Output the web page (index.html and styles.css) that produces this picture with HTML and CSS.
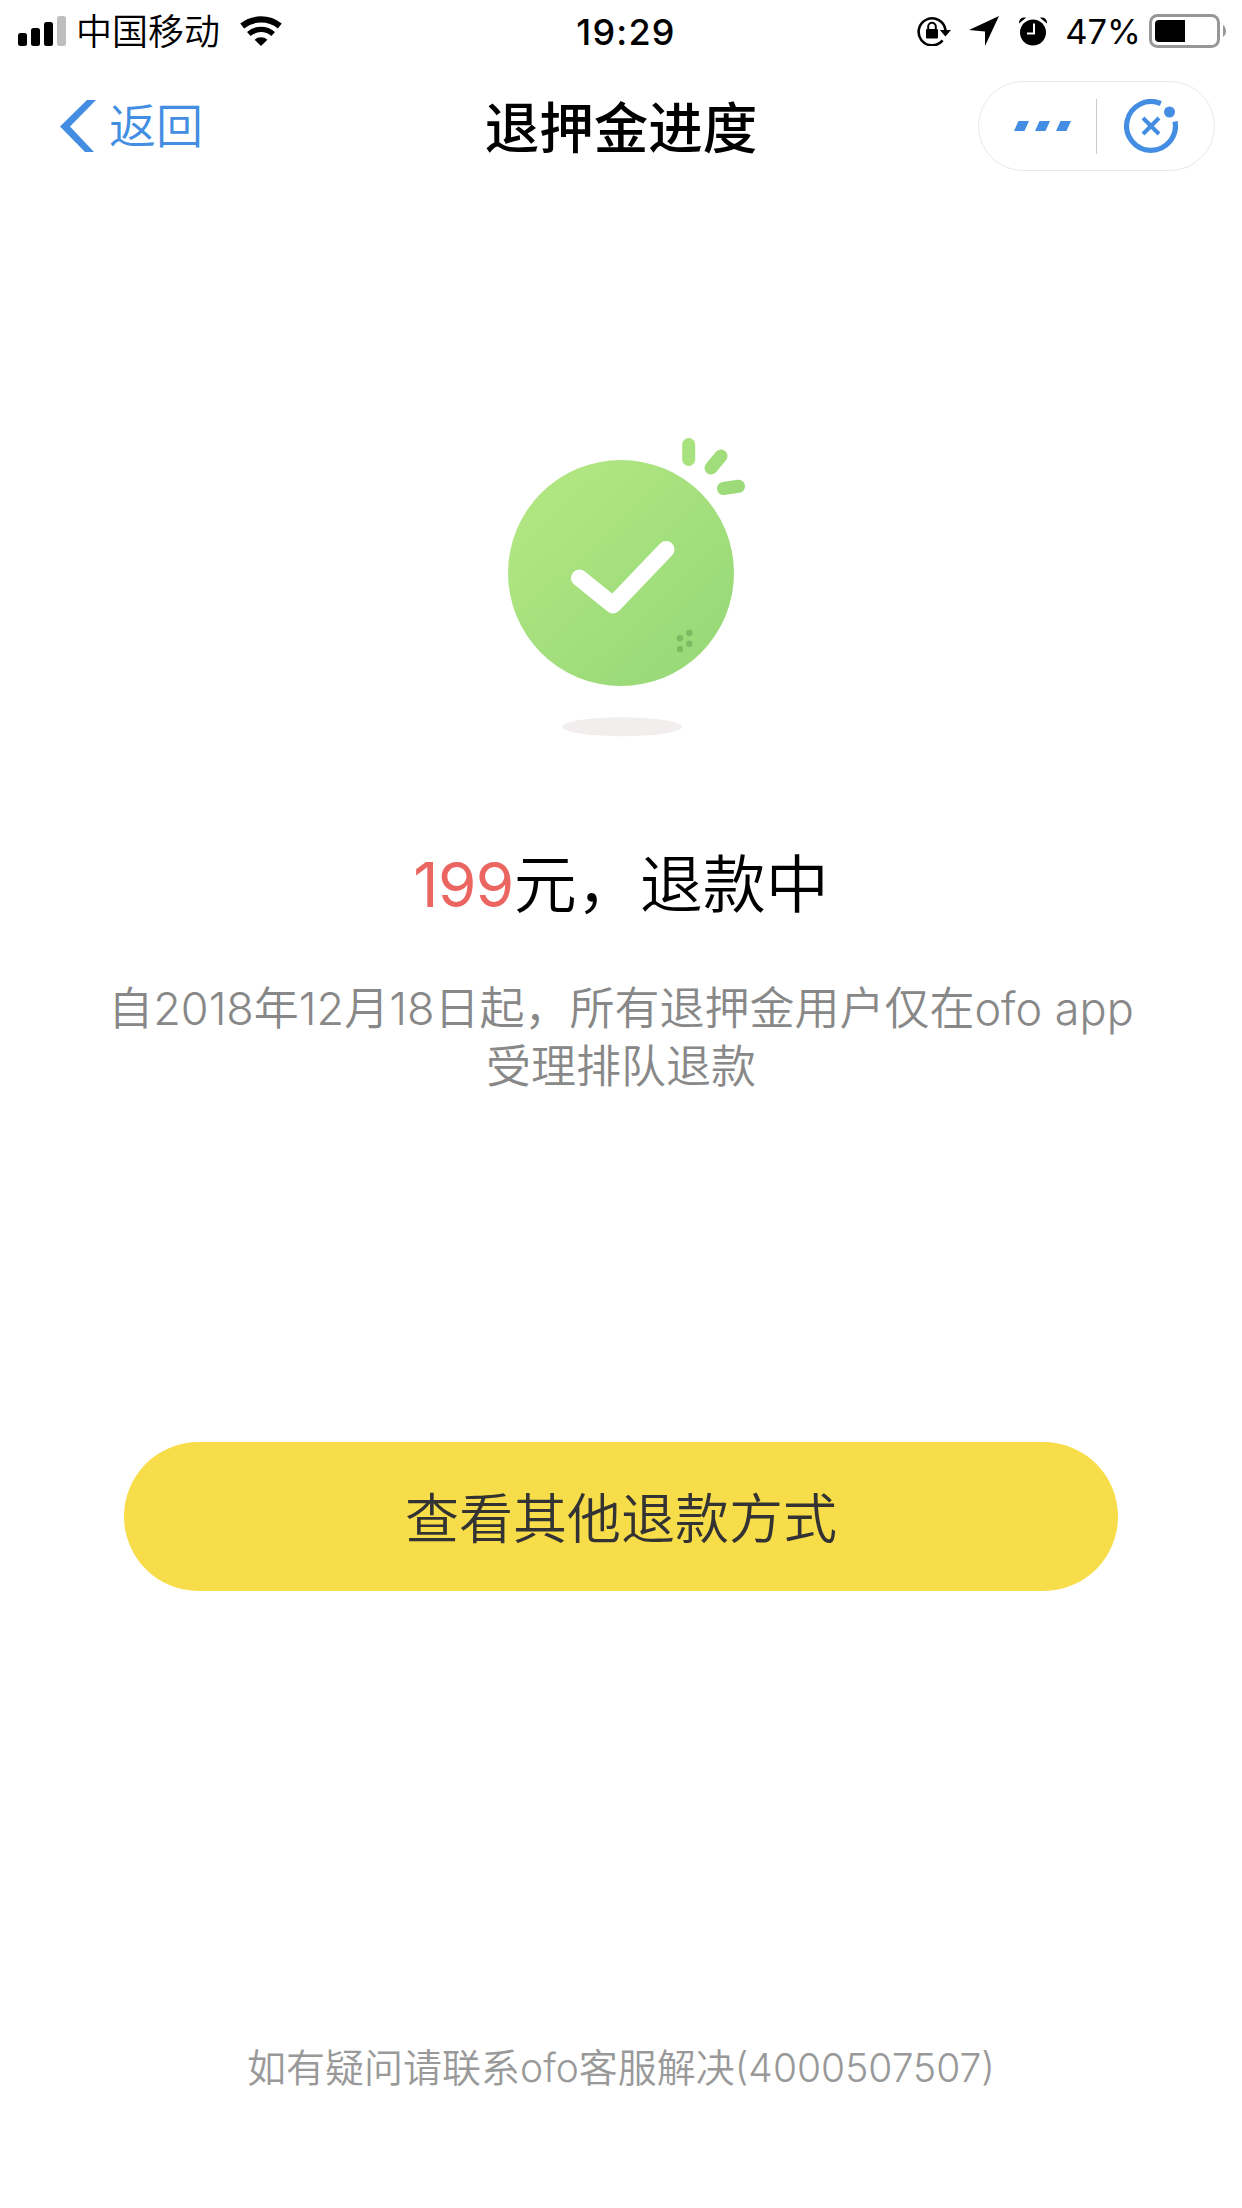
FILE: index.html
```
<!DOCTYPE html>
<html lang="zh-CN">
<head>
    <meta charset="UTF-8">
    <meta name="viewport" content="width=device-width, initial-scale=1.0">
    <title>退押金进度</title>
    <link rel="stylesheet" href="styles.css">
</head>
<body>
    <div class="status-bar">
        <div class="status-left">
            <svg class="signal" width="48" height="30" viewBox="0 0 48 30">
                <rect x="0" y="17" width="9" height="13" rx="2.5"/>
                <rect x="13" y="12" width="9" height="18" rx="2.5"/>
                <rect x="26" y="6" width="9" height="24" rx="2.5"/>
                <rect x="39" y="0" width="9" height="30" rx="2.5" fill="#bfbfbf"/>
            </svg>
            <span class="carrier">中国移动</span>
            <svg class="wifi" width="42" height="30" viewBox="0 0 42 30">
                <path d="M2.2 10A30 30 0 0 1 39.8 10" fill="none" stroke="#000" stroke-width="6.2"/>
                <path d="M8.8 18A18.5 18.5 0 0 1 33.2 18" fill="none" stroke="#000" stroke-width="5.4"/>
                <path d="M14.6 23.8a9.5 9.5 0 0 1 12.8 0L21 30z"/>
            </svg>
        </div>
        <div class="clock">19:29</div>
        <div class="status-right">
            <svg class="lock" width="34" height="30" viewBox="0 0 34 30">
                <path d="M25.6 24.4A13.5 13.5 0 1 1 28.5 14" fill="none" stroke="#000" stroke-width="2.6"/>
                <path d="M22.8 14h11.2l-5.6 6.6z"/>
                <rect x="9" y="13" width="12" height="9.5" rx="1"/>
                <path d="M11.2 14v-3.4a3.8 3.8 0 0 1 7.6 0V14" fill="none" stroke="#000" stroke-width="2"/>
            </svg>
            <svg class="location" width="30" height="30" viewBox="0 0 30 30">
                <path d="M30 0L16 30V15.5L0 14z"/>
            </svg>
            <svg class="alarm" width="28" height="29" viewBox="0 0 28 29">
                <circle cx="14" cy="15.5" r="13"/>
                <path d="M0 6.5C-.4 2 3.4-.6 7 .8zM28 6.5C28.4 2 24.6-.6 21 .8z"/>
                <path d="M15 6.5V16.5H8" fill="none" stroke="#fff" stroke-width="2"/>
            </svg>
            <span class="percent">47%</span>
            <svg class="battery" width="78" height="34" viewBox="0 0 78 34">
                <rect x="1.5" y="1.5" width="68" height="31" rx="7" fill="none" stroke="#979797" stroke-width="3"/>
                <path d="M10 6H36V28H10a4 4 0 0 1-4-4V10a4 4 0 0 1 4-4z"/>
                <path d="M74 11a7.5 7.5 0 0 1 0 12z" fill="#979797"/>
            </svg>
        </div>
    </div>

    <div class="nav">
        <a class="back">
            <svg width="36" height="52" viewBox="0 0 36 52">
                <path d="M27 0H36L10 26.5 34 52H25L0 26.5z" fill="#438ee3"/>
            </svg>
            <span>返回</span>
        </a>
        <h1>退押金进度</h1>
        <div class="capsule">
            <svg class="more" width="57" height="10" viewBox="0 0 57 10">
                <path d="M4.5 0H15L10.5 10H0zM25.5 0H36L31.5 10H21zM46.5 0H57L52.5 10H42z" fill="#438ee3"/>
            </svg>
            <i class="divider"></i>
            <svg class="close" width="54" height="54" viewBox="0 0 54 54">
                <path d="M36.8 4.6A24.4 24.4 0 1 0 51 22.5" fill="none" stroke="#438ee3" stroke-width="5.2"/>
                <circle cx="45.5" cy="13" r="5.5" fill="#438ee3"/>
                <path d="M19 19l16 16M35 19L19 35" stroke="#438ee3" stroke-width="4"/>
            </svg>
        </div>
    </div>

    <div class="content">
        <svg class="success" width="290" height="330" viewBox="-4 0 290 330">
            <defs>
                <linearGradient id="green" x1="0.1" y1="0.1" x2="0.85" y2="0.9">
                    <stop offset="0" stop-color="#b2e783"/>
                    <stop offset="1" stop-color="#98d978"/>
                </linearGradient>
            </defs>
            <circle cx="141" cy="153" r="113" fill="url(#green)"/>
            <path d="M99.5 158L133 185 186 129.5" fill="none" stroke="#fff" stroke-width="17" stroke-linecap="round" stroke-linejoin="round"/>
            <g stroke-width="13" stroke-linecap="round">
                <path d="M208.7 24.5V39.5" stroke="#a8e27e"/>
                <path d="M241 36L231 48" stroke="#a1de7b"/>
                <path d="M258.5 66.3L243.5 68.5" stroke="#9ddb7a"/>
            </g>
            <g fill="#7eba62">
                <circle cx="209.3" cy="213" r="3.2"/>
                <circle cx="200" cy="218.3" r="3.2"/>
                <circle cx="209.3" cy="223.7" r="3.2"/>
                <circle cx="200" cy="229" r="3.2"/>
            </g>
            <ellipse cx="142" cy="306.7" rx="60" ry="9.5" fill="#f2eeee"/>
        </svg>
        <h2><span class="amount">199</span>元，退款中</h2>
        <p class="desc">自2018年12月18日起，所有退押金用户仅在ofo app<br>受理排队退款</p>
        <button class="btn">查看其他退款方式</button>
    </div>

    <div class="footer">如有疑问请联系ofo客服解决(4000507507)</div>
</body>
</html>
```
FILE: styles.css
```
* {
    box-sizing: border-box;
}

body {
    margin: 0;
    height: 2208px;
    display: flex;
    flex-direction: column;
    background-color: #fff;
    color: #000;
    font-family: Inter, "Noto Sans CJK SC", sans-serif;
    font-weight: 350;
}

svg {
    display: block;
    flex-shrink: 0;
}

/* Status bar */
.status-bar {
    display: grid;
    grid-template-columns: 1fr auto 1fr;
    align-items: center;
    height: 60px;
    padding: 0 15px 0 18px;
    font-size: 36px;
    line-height: 60px;
}

.status-left,
.status-right {
    display: flex;
    align-items: center;
}

.status-right {
    justify-content: flex-end;
}

.carrier {
    margin: 2px 20px 0 10px;
}

.clock {
    padding: 1px 0 0 7px;
    font-size: 36px;
    font-weight: 500;
    letter-spacing: 1.2px;
}

.location {
    margin-left: 18px;
}

.alarm {
    margin-left: 20px;
}

.percent {
    margin: 1px 8px 0 18px;
    font-size: 34.5px;
    font-weight: 400;
}

/* Navigation */
.nav {
    display: grid;
    grid-template-columns: 1fr auto 1fr;
    align-items: center;
    height: 132px;
}

.back {
    display: flex;
    align-items: center;
    gap: 13px;
    padding-left: 60px;
    color: #438ee3;
    font-size: 47px;
    line-height: 60px;
}

.nav h1 {
    margin: 0;
    padding-top: 3px;
    font-size: 54.5px;
    font-weight: 500;
    line-height: 80px;
}

.capsule {
    display: flex;
    align-items: center;
    justify-self: end;
    width: 237px;
    height: 90px;
    margin-right: 27px;
    padding-left: 35px;
    border: 1px solid #e8e8e8;
    border-radius: 45px;
}

.divider {
    width: 1px;
    height: 55px;
    margin: 0 27px 0 25px;
    background-color: #ccc;
}

/* Refund progress */
.content {
    display: flex;
    flex-direction: column;
    align-items: center;
    padding-top: 228px;
}

.content h2 {
    margin: 89px 0 0;
    font-size: 63px;
    font-weight: 350;
    line-height: 90px;
}

.amount {
    color: #eb6561;
    font-size: 62px;
    font-weight: 400;
    letter-spacing: -0.5px;
}

.desc {
    margin: 50px 0 0;
    color: #888;
    font-size: 45px;
    line-height: 58px;
    text-align: center;
}

.btn {
    width: 994px;
    height: 149px;
    margin-top: 346px;
    padding-bottom: 4px;
    border: none;
    border-radius: 75px;
    background-color: #f8dd4a;
    color: #333;
    font-family: inherit;
    font-size: 54px;
    font-weight: inherit;
}

.footer {
    margin-top: auto;
    padding-bottom: 110px;
    color: #999;
    font-size: 39px;
    line-height: 60px;
    text-align: center;
}
```
